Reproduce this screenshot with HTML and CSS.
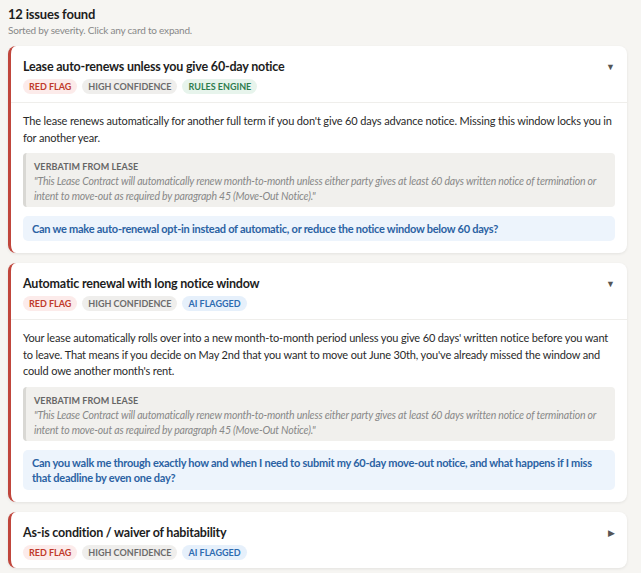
FILE: index.html
```html
<!DOCTYPE html>
<html lang="en">
<head>
    <meta charset="UTF-8">
    <meta name="viewport" content="width=device-width, initial-scale=1.0">
    <title>Lease Issues</title>
    <link rel="stylesheet" href="styles.css">
</head>
<body>
    <div class="summary">
        <h1>12 issues found</h1>
        <p class="hint">Sorted by severity. Click any card to expand.</p>
    </div>

    <div class="issue open">
        <div class="issue-head">
            <div>
                <h2>Lease auto-renews unless you give 60-day notice</h2>
                <div class="tags">
                    <span class="tag red">Red flag</span>
                    <span class="tag grey">High confidence</span>
                    <span class="tag green">Rules engine</span>
                </div>
            </div>
            <span class="toggle">&#9660;</span>
        </div>
        <div class="issue-body">
            <p>The lease renews automatically for another full term if you don't give 60 days advance notice. Missing this window locks you in for another year.</p>
            <div class="quote">
                <div class="quote-label">Verbatim from lease</div>
                <p>"This Lease Contract will automatically renew month-to-month unless either party gives at least 60 days written notice of termination or intent to move-out as required by paragraph 45 (Move-Out Notice)."</p>
            </div>
            <div class="question">Can we make auto-renewal opt-in instead of automatic, or reduce the notice window below 60 days?</div>
        </div>
    </div>

    <div class="issue open">
        <div class="issue-head">
            <div>
                <h2>Automatic renewal with long notice window</h2>
                <div class="tags">
                    <span class="tag red">Red flag</span>
                    <span class="tag grey">High confidence</span>
                    <span class="tag blue">AI flagged</span>
                </div>
            </div>
            <span class="toggle">&#9660;</span>
        </div>
        <div class="issue-body">
            <p>Your lease automatically rolls over into a new month-to-month period unless you give 60 days' written notice before you want to leave. That means if you decide on May 2nd that you want to move out June 30th, you've already missed the window and could owe another month's rent.</p>
            <div class="quote">
                <div class="quote-label">Verbatim from lease</div>
                <p>"This Lease Contract will automatically renew month-to-month unless either party gives at least 60 days written notice of termination or intent to move-out as required by paragraph 45 (Move-Out Notice)."</p>
            </div>
            <div class="question">Can you walk me through exactly how and when I need to submit my 60-day move-out notice, and what happens if I miss that deadline by even one day?</div>
        </div>
    </div>

    <div class="issue">
        <div class="issue-head">
            <div>
                <h2>As-is condition / waiver of habitability</h2>
                <div class="tags">
                    <span class="tag red">Red flag</span>
                    <span class="tag grey">High confidence</span>
                    <span class="tag blue">AI flagged</span>
                </div>
            </div>
            <span class="toggle">&#9654;</span>
        </div>
    </div>
</body>
</html>
```

FILE: styles.css
```css
body {
    font-family: Lato, "Open Sans", sans-serif;
    background-color: #f6f5f2;
    color: #222;
    margin: 0;
    padding: 5px 14px 8px 8px;
}
.summary {
    margin-bottom: 9px;
}
h1 {
    font-size: 13px;
    font-weight: 700;
    letter-spacing: -0.2px;
    margin: 0;
    line-height: 18px;
    color: #1d1d1d;
}
.hint {
    font-size: 10px;
    letter-spacing: -0.2px;
    color: #888;
    margin: 0;
    line-height: 14px;
}
.issue {
    background-color: #fff;
    border-left: 3px solid #c0463c;
    border-radius: 8px;
    box-shadow: 0 1px 3px rgba(0, 0, 0, 0.08);
    margin-bottom: 10px;
}
.issue-head {
    display: flex;
    justify-content: space-between;
    align-items: flex-start;
    padding: 12px 12px 8px 12px;
}
.issue.open .issue-head {
    border-bottom: 1px solid #efeeeb;
}
h2 {
    font-size: 12.5px;
    font-weight: 700;
    letter-spacing: -0.2px;
    margin: 0 0 4px;
    line-height: 17px;
    color: #1d1d1d;
}
.toggle {
    font-size: 9px;
    color: #555;
    margin-top: 3px;
}
.tags {
    display: flex;
    gap: 5px;
}
.tag {
    font-size: 9px;
    font-weight: 700;
    text-transform: uppercase;
    padding: 0 6px;
    line-height: 15px;
    border-radius: 8px;
}
.tag.red {
    color: #c0392b;
    background-color: #fcebea;
}
.tag.grey {
    color: #6b6b6b;
    background-color: #efeeec;
}
.tag.green {
    color: #2f7d4e;
    background-color: #e7f4ec;
}
.tag.blue {
    color: #2d6bb0;
    background-color: #e6f0fb;
}
.issue-body {
    padding: 10px 12px 12px 12px;
}
.issue-body > p {
    font-size: 11px;
    letter-spacing: -0.15px;
    line-height: 16.5px;
    margin: 0 0 7px;
    color: #2a2a2a;
}
.quote {
    background-color: #f1f0ed;
    border-left: 3px solid #d9d8d4;
    border-radius: 4px;
    padding: 6px 10px 3px 8px;
    margin-bottom: 9px;
}
.quote-label {
    font-size: 9px;
    font-weight: 700;
    text-transform: uppercase;
    letter-spacing: 0.1px;
    color: #666;
    line-height: 15px;
}
.quote p {
    font-size: 10.5px;
    font-style: italic;
    letter-spacing: -0.2px;
    color: #888;
    line-height: 15px;
    margin: 0;
}
.question {
    background-color: #edf4fc;
    border-radius: 5px;
    color: #2b62a3;
    font-size: 11px;
    font-weight: 700;
    letter-spacing: -0.25px;
    line-height: 15px;
    padding: 5px 9px;
}
```
